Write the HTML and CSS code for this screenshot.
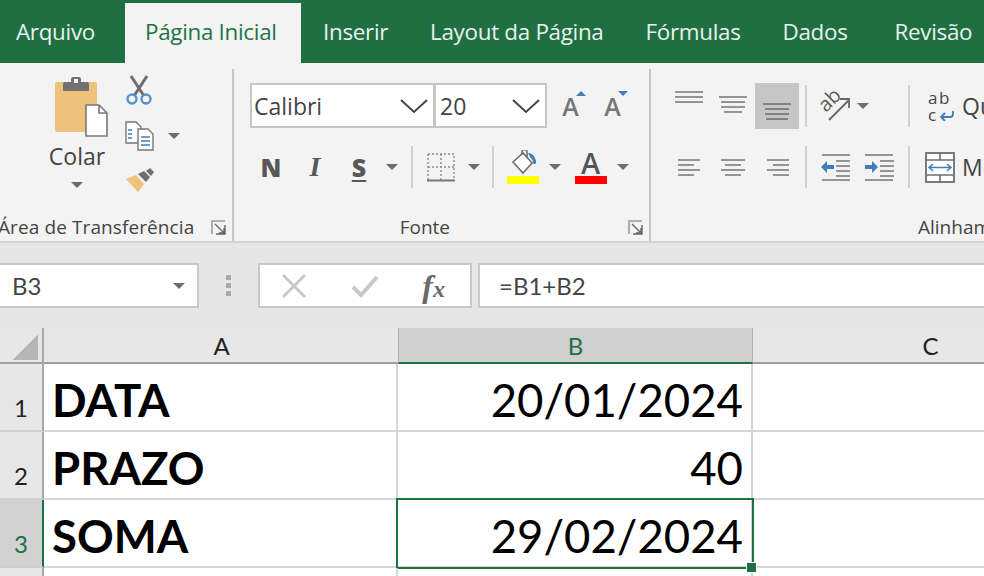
FILE: index.html
```html
<!DOCTYPE html>
<html lang="pt-BR">
<head>
    <meta charset="UTF-8">
    <meta name="viewport" content="width=device-width, initial-scale=1.0">
    <title>Excel - Soma de datas</title>
    <link rel="stylesheet" href="styles.css">
</head>
<body>
    <div class="tabs">
        <span class="tab tab-file">Arquivo</span>
        <span class="tab tab-active">Página Inicial</span>
        <span class="tab">Inserir</span>
        <span class="tab">Layout da Página</span>
        <span class="tab">Fórmulas</span>
        <span class="tab">Dados</span>
        <span class="tab tab-review">Revisão</span>
    </div>

    <div class="ribbon">
        <section class="group group-clipboard">
            <div class="clipboard-body">
                <div class="paste">
                    <svg width="54" height="61" viewBox="0 0 54 61">
                        <rect x="1" y="6" width="42" height="50" rx="2" fill="#eec27a"/>
                        <path d="M9 15V8a2 2 0 0 1 2-2h6V3a2 2 0 0 1 2-2h6a2 2 0 0 1 2 2v3h6a2 2 0 0 1 2 2v7z" fill="#707070"/>
                        <rect x="20" y="3" width="4" height="4" fill="#f3f3f3"/>
                        <path d="M32 29h13l8 8v23H32z" fill="#fff" stroke="#777" stroke-width="1.6"/>
                        <path d="M45 29v8h8" fill="none" stroke="#777" stroke-width="1.6"/>
                    </svg>
                    <span class="paste-label">Colar</span>
                    <i class="caret"></i>
                </div>
                <div class="clip-tools">
                    <svg width="28" height="30" viewBox="0 0 28 30">
                        <path d="M6 1l13 20M22 1L9 21" stroke="#6e6e6e" stroke-width="3" fill="none"/>
                        <circle cx="7" cy="24" r="4.5" fill="none" stroke="#5a8fc8" stroke-width="2.4"/>
                        <circle cx="21" cy="24" r="4.5" fill="none" stroke="#5a8fc8" stroke-width="2.4"/>
                    </svg>
                    <div class="copy-row">
                        <svg width="30" height="30" viewBox="0 0 30 30">
                            <path d="M1 1h10l5 5v16H1z" fill="#fff" stroke="#777" stroke-width="1.4"/>
                            <path d="M3 9h4M3 13h4M3 17h4" stroke="#3f7ebd" stroke-width="1.6"/>
                            <path d="M13 8h10l5 5v16H13z" fill="#fff" stroke="#777" stroke-width="1.4"/>
                            <path d="M16 16h9M16 20h9M16 24h9" stroke="#3f7ebd" stroke-width="1.6"/>
                        </svg>
                        <i class="caret"></i>
                    </div>
                    <svg width="30" height="26" viewBox="0 0 30 26">
                        <path d="M1 12l10-4 8 9-6 8z" fill="#eec27a"/>
                        <path d="M13 7l6-3 6 6-4 5z" fill="#6e6e6e"/>
                        <path d="M21 4l4-3 4 4-3 4z" fill="#6e6e6e"/>
                    </svg>
                </div>
            </div>
            <div class="group-label label-clipboard">
                <span>Área de Transferência</span>
                <svg class="launcher" width="15" height="15" viewBox="0 0 15 15">
                    <path d="M1 14V1h13" fill="none" stroke="#9a9a9a" stroke-width="1.6"/>
                    <path d="M14 5v9H5M4 4l9 9M13 8v5H8" fill="none" stroke="#666" stroke-width="1.4"/>
                </svg>
            </div>
        </section>

        <section class="group group-font">
            <div class="font-row">
                <div class="combo combo-font"><span>Calibri</span>
                    <svg width="30" height="16" viewBox="0 0 30 16"><path d="M2 2l13 12L28 2" fill="none" stroke="#444" stroke-width="2"/></svg>
                </div>
                <div class="combo combo-size"><span>20</span>
                    <svg width="30" height="16" viewBox="0 0 30 16"><path d="M2 2l13 12L28 2" fill="none" stroke="#444" stroke-width="2"/></svg>
                </div>
                <span class="grow-btn"><span class="glyph-a">A</span><i class="mark mark-up"></i></span>
                <span class="grow-btn"><span class="glyph-a">A</span><i class="mark mark-down"></i></span>
            </div>
            <div class="format-row">
                <span class="fmt">N</span>
                <span class="fmt fmt-italic">I</span>
                <span class="fmt fmt-under">S</span>
                <i class="caret"></i>
                <i class="sep"></i>
                <svg width="28" height="29" viewBox="0 0 28 29">
                    <path d="M1 1h26v26M1 1v26M14 1v26M1 14h26" fill="none" stroke="#8a8a8a" stroke-width="1.4" stroke-dasharray="2 2"/>
                    <path d="M0 27.5h28" stroke="#777" stroke-width="2"/>
                </svg>
                <i class="caret"></i>
                <i class="sep"></i>
                <div class="color-btn">
                    <svg width="32" height="26" viewBox="0 0 32 26">
                        <path d="M6 12L16 3l9 10-9 10z" fill="#fff" stroke="#6e6e6e" stroke-width="1.6"/>
                        <path d="M15 5V2a2 2 0 0 1 5 0v6" fill="none" stroke="#6e6e6e" stroke-width="1.6"/>
                        <path d="M21 3c4 0 7 3 8 8 1 3-3 5-3 1 0-2-2-4-3-5z" fill="#3f7ebd"/>
                    </svg>
                    <i class="color-bar bar-yellow"></i>
                </div>
                <i class="caret"></i>
                <div class="color-btn">
                    <span class="glyph-color">A</span>
                    <i class="color-bar bar-red"></i>
                </div>
                <i class="caret"></i>
            </div>
            <div class="group-label label-font">
                <span>Fonte</span>
                <svg class="launcher" width="15" height="15" viewBox="0 0 15 15">
                    <path d="M1 14V1h13" fill="none" stroke="#9a9a9a" stroke-width="1.6"/>
                    <path d="M14 5v9H5M4 4l9 9M13 8v5H8" fill="none" stroke="#666" stroke-width="1.4"/>
                </svg>
            </div>
        </section>

        <section class="group group-align">
            <div class="align-row-top">
                <svg class="va-top" width="28" height="12" viewBox="0 0 28 12"><path d="M0 1h28M0 6h28M0 11h28" stroke="#777" stroke-width="1.6"/></svg>
                <svg class="va-mid" width="28" height="17" viewBox="0 0 28 17"><path d="M0 1h28M2 6h24M2 11h24M5 16h18" stroke="#777" stroke-width="1.6"/></svg>
                <span class="va-active">
                    <svg width="28" height="17" viewBox="0 0 28 17"><path d="M0 1h28M2 6h24M2 11h24M3 16h22" stroke="#6c6c6c" stroke-width="1.6"/></svg>
                </span>
                <i class="sep"></i>
                <svg class="orient-icon" width="32" height="30" viewBox="0 0 32 30">
                    <text class="orient-text" transform="translate(7 22) rotate(-45)" x="0" y="0">ab</text>
                    <path d="M10 29L30 9M21 8h9v9" fill="none" stroke="#666" stroke-width="1.8"/>
                </svg>
                <i class="caret"></i>
                <i class="sep sep-end"></i>
                <span class="wrap-icon">
                    <span class="wrap-letters">ab</span>
                    <span class="wrap-letters">c</span>
                    <svg class="wrap-arrow" width="15" height="11" viewBox="0 0 15 11"><path d="M14 1v3a3 3 0 0 1-3 3H2M6 3L2 7l4 4" fill="none" stroke="#3f7ebd" stroke-width="1.8"/></svg>
                </span>
                <span class="long-text">Quebrar Texto Automaticamente</span>
            </div>
            <div class="align-row-bottom">
                <svg width="23" height="17" viewBox="0 0 23 17"><path d="M0 1h22M0 6h16M0 11h22M0 16h16" stroke="#777" stroke-width="1.6"/></svg>
                <svg width="26" height="17" viewBox="0 0 26 17"><path d="M1 1h24M5 6h16M1 11h24M5 16h16" stroke="#777" stroke-width="1.6"/></svg>
                <svg width="23" height="17" viewBox="0 0 23 17"><path d="M1 1h22M7 6h16M1 11h22M7 16h16" stroke="#777" stroke-width="1.6"/></svg>
                <i class="sep"></i>
                <svg width="29" height="27" viewBox="0 0 29 27">
                    <path d="M1 1h28M15 7h14M15 12h14M15 17h14M15 22h14M1 26h28" stroke="#777" stroke-width="1.6"/>
                    <path d="M0 13l6-6v4h7v4H6v4z" fill="#3f7ebd"/>
                </svg>
                <svg width="29" height="27" viewBox="0 0 29 27">
                    <path d="M0 1h28M15 7h14M15 12h14M15 17h14M15 22h14M0 26h28" stroke="#777" stroke-width="1.6"/>
                    <path d="M13 13L7 7v4H0v4h7v4z" fill="#3f7ebd"/>
                </svg>
                <i class="sep"></i>
                <svg width="30" height="31" viewBox="0 0 30 31">
                    <rect x="1" y="1" width="28" height="29" fill="#fff" stroke="#6e6e6e" stroke-width="1.8"/>
                    <path d="M1 8h28M1 23h28M15 1v7M15 23v7" stroke="#6e6e6e" stroke-width="1.6"/>
                    <path d="M4 15.5h22M8 12l-4 3.5L8 19M22 12l4 3.5L22 19" fill="none" stroke="#3f7ebd" stroke-width="1.5"/>
                </svg>
                <span class="long-text">Mesclar e Centralizar</span>
            </div>
            <div class="group-label label-align"><span>Alinhamento</span></div>
        </section>
    </div>

    <div class="formula-bar">
        <div class="name-box"><span>B3</span><i class="caret"></i></div>
        <div class="grip"><i></i><i></i><i></i></div>
        <div class="fx-box">
            <svg width="26" height="26" viewBox="0 0 26 26"><path d="M2 2l22 22M24 2L2 24" stroke="#c8c8c8" stroke-width="3"/></svg>
            <svg width="28" height="24" viewBox="0 0 28 24"><path d="M2 13l8 8L26 3" fill="none" stroke="#c8c8c8" stroke-width="4"/></svg>
            <span class="fx">f<span class="fx-x">x</span></span>
        </div>
        <div class="formula-input">=B1+B2</div>
    </div>

    <div class="sheet">
        <div class="corner"><i class="corner-mark"></i></div>
        <div class="col-head col-a">A</div>
        <div class="col-head col-selected">B</div>
        <div class="col-head col-last">C</div>

        <div class="row-head">1</div>
        <div class="cell cell-bold">DATA</div>
        <div class="cell cell-num">20/01/2024</div>
        <div class="cell cell-last"></div>

        <div class="row-head">2</div>
        <div class="cell cell-bold">PRAZO</div>
        <div class="cell cell-num">40</div>
        <div class="cell cell-last"></div>

        <div class="row-head row-selected">3</div>
        <div class="cell cell-bold">SOMA</div>
        <div class="cell cell-num cell-active">29/02/2024</div>
        <div class="cell cell-last"></div>

        <div class="row-head"></div>
        <div class="cell"></div>
        <div class="cell"></div>
        <div class="cell cell-last"></div>
    </div>
</body>
</html>
```

FILE: styles.css
```css
* {
    box-sizing: border-box;
}
html, body {
    margin: 0;
    width: 984px;
    height: 576px;
    overflow: hidden;
}
body {
    font-family: "Open Sans", "Noto Sans", sans-serif;
    color: #444;
    background: #fff;
}
i {
    display: block;
}
svg {
    display: block;
    flex: none;
}

/* tabs */
.tabs {
    display: flex;
    height: 63px;
    padding-top: 3px;
    background: #1f6f43;
    white-space: nowrap;
    font-size: 22.4px;
    letter-spacing: -0.3px;
    color: #e9f1ec;
}
.tab {
    flex: none;
    display: flex;
    align-items: center;
    padding: 0 21px 3px;
}
.tab-file {
    width: 125px;
    padding: 0 0 3px 16px;
}
.tab-active {
    width: 176px;
    padding: 0 0 3px 20px;
    background: #f3f3f3;
    color: #217346;
}
.tab-active + .tab {
    padding-left: 22px;
}
.tab-review {
    margin-left: 5px;
    padding-right: 0;
}

/* ribbon */
.ribbon {
    display: flex;
    height: 180px;
    background: #f3f3f3;
    border-bottom: 2px solid #d4d4d4;
    overflow: hidden;
}
.group {
    flex: none;
    position: relative;
    display: flex;
    flex-direction: column;
    height: 172px;
    margin-top: 6px;
    border-right: 2px solid #c6c6c6;
}
.group-label {
    margin-top: auto;
    height: 28px;
    display: flex;
    align-items: center;
    font-size: 19px;
    white-space: nowrap;
}
.launcher {
    flex: none;
}
.caret {
    flex: none;
    width: 0;
    height: 0;
    border-left: 6px solid transparent;
    border-right: 6px solid transparent;
    border-top: 6px solid #6d6d6d;
}
.sep {
    width: 2px;
    height: 42px;
    background: #d0d0d0;
}

.group-clipboard {
    width: 234px;
}
.clipboard-body {
    display: flex;
    padding: 7px 0 0 47px;
}
.paste {
    width: 60px;
    display: flex;
    flex-direction: column;
    align-items: center;
}
.paste svg {
    margin-left: 7px;
}
.paste-label {
    margin-top: 3px;
    font-size: 23px;
    line-height: 32px;
}
.paste .caret {
    margin-top: 10px;
}
.clip-tools {
    margin: -1px 0 0 18px;
    display: flex;
    flex-direction: column;
    gap: 16px;
}
.copy-row {
    display: flex;
    align-items: center;
    gap: 13px;
}
.label-clipboard {
    margin-left: -2px;
    gap: 17px;
    letter-spacing: 0.1px;
}

.group-font {
    width: 417px;
    padding-left: 16px;
}
.font-row {
    display: flex;
    align-items: center;
    margin-top: 14px;
}
.combo {
    display: flex;
    align-items: center;
    justify-content: space-between;
    height: 45px;
    padding: 0 4px 0 2px;
    background: #fff;
    border: 2px solid #c6c6c6;
    font-size: 23px;
}
.combo-font {
    width: 185px;
}
.combo-size {
    width: 113px;
    margin-left: -1px;
    padding-left: 4px;
}
.grow-btn {
    position: relative;
    width: 41px;
    text-align: center;
    margin-left: 3px;
}
.grow-btn + .grow-btn {
    margin-left: 1px;
}
.glyph-a {
    font-size: 25px;
    font-weight: 600;
    color: #767676;
}
.mark {
    position: absolute;
    top: 2px;
    right: 5px;
    width: 0;
    height: 0;
    border-left: 5px solid transparent;
    border-right: 5px solid transparent;
}
.mark-up {
    border-bottom: 5px solid #3f7ebd;
}
.mark-down {
    border-top: 5px solid #3f7ebd;
}
.format-row {
    display: grid;
    grid-template-columns: 42px 46px 42px 24px 16px 42px 24px 14px 46px 18px 53px 12px;
    align-items: center;
    justify-items: center;
    height: 42px;
    margin-top: 18px;
}
.fmt {
    font-size: 25px;
    font-weight: 800;
    color: #585858;
}
.fmt-italic {
    font-family: "Liberation Serif", serif;
    font-style: italic;
    font-size: 28px;
}
.fmt-under {
    text-decoration: underline;
    text-underline-offset: 3px;
}
.color-btn {
    display: flex;
    flex-direction: column;
    align-items: center;
    width: 32px;
}
.glyph-color {
    font-size: 29px;
    line-height: 26px;
    font-weight: 600;
    color: #555;
}
.color-bar {
    width: 32px;
    height: 8px;
}
.bar-yellow {
    background: #ffff00;
}
.bar-red {
    background: #f00;
}
.label-font {
    justify-content: flex-end;
    padding-right: 6px;
}
.label-font span {
    margin-right: 178px;
}

.group-align {
    width: 333px;
    border-right: 0;
    padding-left: 16px;
    overflow: hidden;
}
.align-row-top {
    display: grid;
    grid-template-columns: 44px 44px 44px 14px 44px 12px 41px 52px 22px;
    align-items: center;
    justify-items: center;
    height: 46px;
    margin-top: 14px;
}
.va-top {
    margin-bottom: 18px;
}
.va-mid {
    margin-bottom: 4px;
}
.va-active {
    display: flex;
    align-items: center;
    justify-content: center;
    width: 44px;
    height: 46px;
    padding-top: 10px;
    background: #c6c6c6;
}
.sep-end {
    justify-self: end;
}
.orient-icon {
    overflow: visible;
}
.orient-text {
    font-size: 20px;
    fill: #5c5c5c;
}
.wrap-icon {
    justify-self: end;
    position: relative;
    display: block;
    width: 26px;
    height: 34px;
    margin-right: 8px;
}
.wrap-letters {
    display: block;
    font-size: 17px;
    line-height: 17px;
    letter-spacing: 1.5px;
    color: #444;
}
.wrap-arrow {
    position: absolute;
    right: 0;
    bottom: 2px;
}
.long-text {
    justify-self: start;
    font-size: 23px;
    white-space: nowrap;
}
.align-row-bottom {
    display: grid;
    grid-template-columns: 44px 44px 44px 14px 44px 44px 16px 45px 22px;
    align-items: center;
    justify-items: center;
    height: 42px;
    margin-top: 17px;
}
.label-align {
    padding-left: 251px;
}

/* formula bar */
.formula-bar {
    display: flex;
    height: 85px;
    padding-top: 20px;
    background: #e6e6e6;
}
.name-box, .fx-box, .formula-input {
    flex: none;
    display: flex;
    align-items: center;
    height: 45px;
    background: #fff;
    border: 2px solid #c8c8c8;
}
.name-box {
    justify-content: space-between;
    width: 199px;
    padding: 0 12px 0 12px;
    border-left: 0;
    font-family: Lato, sans-serif;
    font-size: 24px;
}
.grip {
    flex: none;
    display: flex;
    flex-direction: column;
    justify-content: center;
    gap: 3px;
    width: 59px;
    height: 45px;
    padding-left: 27px;
}
.grip i {
    width: 5px;
    height: 5px;
    background: #aaa;
}
.fx-box {
    justify-content: space-between;
    width: 214px;
    padding: 0 25px 0 21px;
}
.fx {
    font-family: "Liberation Serif", serif;
    font-style: italic;
    font-weight: 700;
    font-size: 32px;
    line-height: 1;
    color: #6a6a6a;
}
.fx-x {
    font-size: 24px;
}
.formula-input {
    width: 506px;
    margin-left: 6px;
    padding-left: 19px;
    border-right: 0;
    font-family: Lato, sans-serif;
    font-size: 24px;
}

/* sheet */
.sheet {
    display: grid;
    width: 984px;
    grid-template-columns: 44px 354px 355px 231px;
    grid-template-rows: 36px 68px 68px 68px 8px;
    font-family: Lato, "Liberation Sans", sans-serif;
    color: #000;
}
.corner, .col-head, .row-head {
    background: #e7e7e7;
}
.corner {
    border-right: 2px solid #a9a9a9;
    border-bottom: 2px solid #a0a0a0;
    padding: 7px 0 0 13px;
}
.corner-mark {
    width: 25px;
    height: 25px;
    background: linear-gradient(135deg, transparent 50%, #b6b6b6 50%);
}
.col-head {
    display: flex;
    align-items: center;
    justify-content: center;
    font-size: 24px;
    color: #222;
    border-bottom: 2px solid #a0a0a0;
}
.col-a {
    margin-right: -1px;
}
.col-selected {
    background: #cfcfcf;
    color: #1f6f43;
    border-left: 1px solid #b0b0b0;
    border-right: 1px solid #b0b0b0;
    border-bottom-color: #1f6f43;
}
.col-last {
    padding-left: 124px;
}
.row-head {
    display: flex;
    align-items: flex-end;
    padding: 0 0 10px 14px;
    font-size: 24px;
    line-height: 1;
    color: #222;
    border-right: 2px solid #a9a9a9;
    border-bottom: 2px solid #cfcfcf;
}
.row-selected {
    background: #d2d2d2;
    color: #1f6f43;
    border-right-color: #1f6f43;
}
.cell {
    position: relative;
    display: flex;
    align-items: flex-end;
    padding: 0 8px 8px 8px;
    font-size: 45.5px;
    line-height: 1;
    border-right: 2px solid #d6d6d6;
    border-bottom: 2px solid #d6d6d6;
}
.cell-last {
    border-right: 0;
}
.cell-bold {
    font-weight: 700;
}
.cell-num {
    justify-content: flex-end;
}
.cell-active::after {
    content: "";
    position: absolute;
    top: -2px;
    left: -2px;
    right: -3px;
    bottom: -3px;
    border: 2px solid #1f6f43;
}
.cell-active::before {
    content: "";
    position: absolute;
    right: -6px;
    bottom: -7px;
    width: 9px;
    height: 9px;
    background: #1f6f43;
    border: 1px solid #fff;
    z-index: 1;
}
```
